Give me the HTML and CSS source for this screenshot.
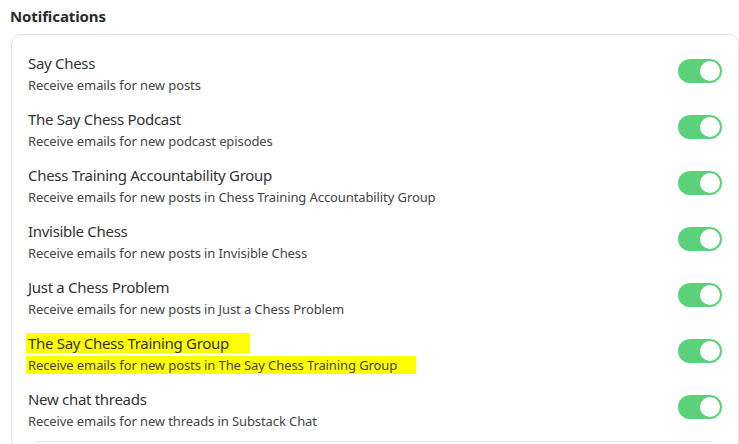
FILE: index.html
```html
<!DOCTYPE html>
<html>
	<head>
		<meta charset="utf-8">
		<title>Notifications</title>
		<link rel="stylesheet" href="styles.css">
	</head>
	<body>
		<h2 class="heading">Notifications</h2>
		<div class="card">
			<div class="row">
				<div class="info">
					<div class="title">Say Chess</div>
					<div class="desc">Receive emails for new posts</div>
				</div>
				<span class="toggle"></span>
			</div>
			<div class="row">
				<div class="info">
					<div class="title">The Say Chess Podcast</div>
					<div class="desc">Receive emails for new podcast episodes</div>
				</div>
				<span class="toggle"></span>
			</div>
			<div class="row">
				<div class="info">
					<div class="title">Chess Training Accountability Group</div>
					<div class="desc">Receive emails for new posts in Chess Training Accountability Group</div>
				</div>
				<span class="toggle"></span>
			</div>
			<div class="row">
				<div class="info">
					<div class="title">Invisible Chess</div>
					<div class="desc">Receive emails for new posts in Invisible Chess</div>
				</div>
				<span class="toggle"></span>
			</div>
			<div class="row">
				<div class="info">
					<div class="title">Just a Chess Problem</div>
					<div class="desc">Receive emails for new posts in Just a Chess Problem</div>
				</div>
				<span class="toggle"></span>
			</div>
			<div class="row">
				<div class="info">
					<div class="title"><span class="mark mark-title">The Say Chess Training Group</span></div>
					<div class="desc"><span class="mark mark-desc">Receive emails for new posts in The Say Chess Training Group</span></div>
				</div>
				<span class="toggle"></span>
			</div>
			<div class="row">
				<div class="info">
					<div class="title">New chat threads</div>
					<div class="desc">Receive emails for new threads in Substack Chat</div>
				</div>
				<span class="toggle"></span>
			</div>
			<div class="divider"></div>
		</div>
	</body>
</html>
```

FILE: styles.css
```css
*{
	margin: 0;
	padding: 0;
	box-sizing: border-box;
}
body{
	font-family: "Noto Sans", "Open Sans", sans-serif;
	color: #333;
	background: #fff;
	padding: 5px 0 0 10px;
}
.heading{
	font-size: 15px;
	font-weight: bold;
	line-height: 22px;
	letter-spacing: -0.1px;
	color: #2b2b2b;
	margin-bottom: 7px;
}
.card{
	margin-left: 1px;
	width: 728px;
	border: 1px solid #e2e2e2;
	border-radius: 10px;
	padding: 8px 16px 0 16px;
}
.row{
	display: flex;
	align-items: center;
	justify-content: space-between;
	height: 56px;
}
.info{
	align-self: flex-start;
	padding-top: 9px;
}
.title{
	font-size: 15px;
	line-height: 22px;
	letter-spacing: -0.3px;
	color: #333;
	margin-bottom: 2px;
}
.desc{
	font-size: 13px;
	line-height: 18px;
	letter-spacing: -0.1px;
	color: #444;
}
.mark{
	background: #ffff00;
	margin-left: -2px;
	padding-left: 2px;
}
.mark-title{
	padding-right: 21px;
}
.mark-desc{
	padding-right: 19px;
}
.toggle{
	position: relative;
	width: 44px;
	height: 24px;
	border-radius: 12px;
	background: #5bd17b;
	flex-shrink: 0;
}
.toggle::after{
	content: "";
	position: absolute;
	right: 2px;
	top: 2px;
	width: 20px;
	height: 20px;
	border-radius: 50%;
	background: #fff;
}
.divider{
	margin: 6px 9px 0 8px;
	border-top: 1px solid #e6e6e6;
	height: 20px;
}
```
